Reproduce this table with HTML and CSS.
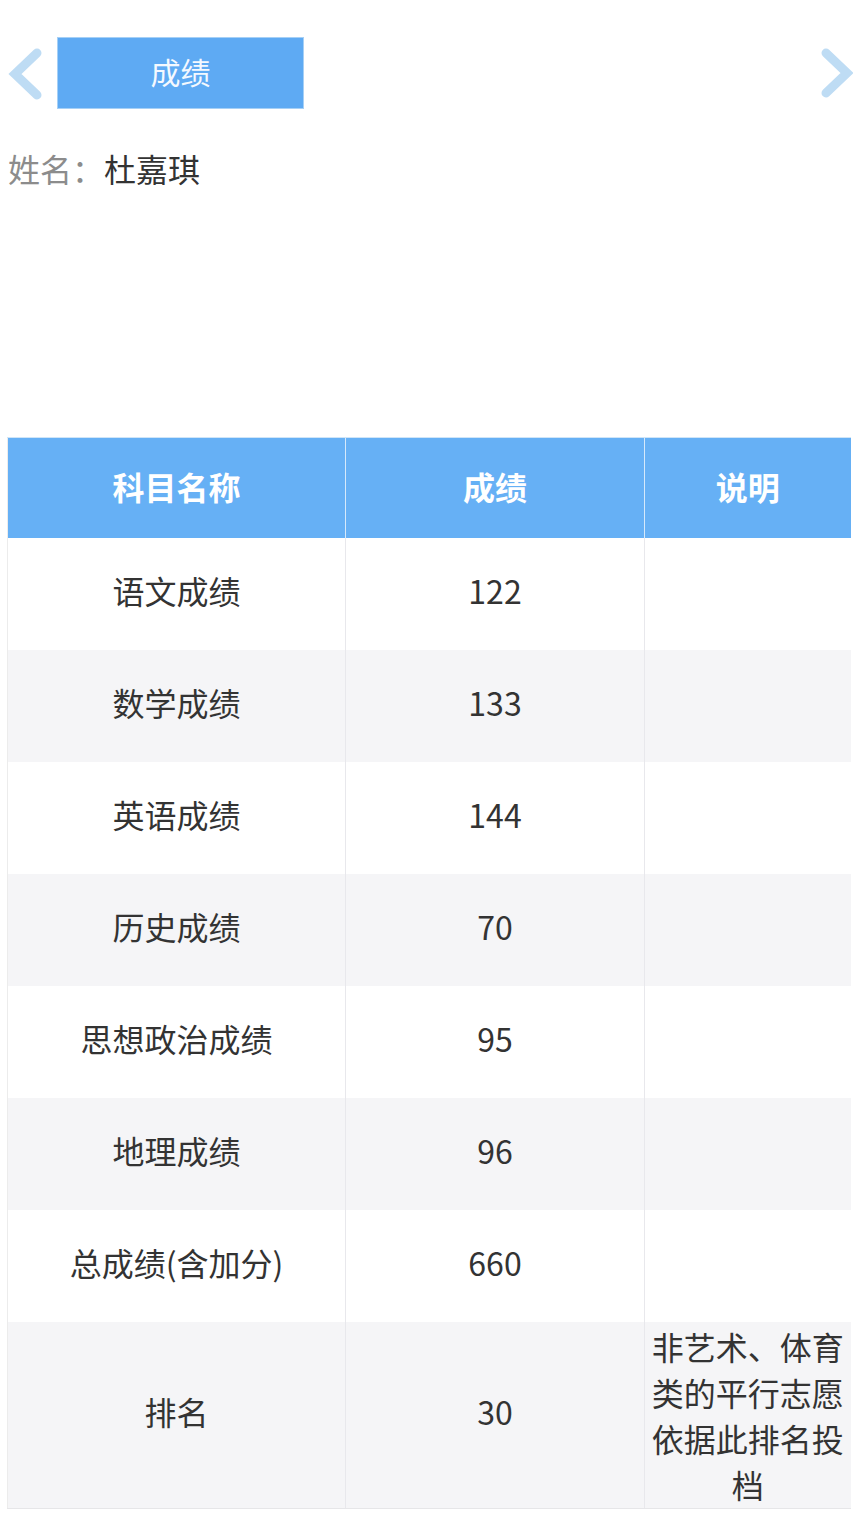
FILE: index.html
```html
<!DOCTYPE html>
<html lang="zh">
<head>
<meta charset="utf-8">
<title>成绩</title>
<link rel="stylesheet" href="styles.css">
</head>
<body>
<div class="page">
  <div class="tabbar">
    <svg class="arrow arrow-left" width="40" height="56" viewBox="0 0 40 56"><polyline points="32,8 10,29 32,50" fill="none" stroke="#bedcf4" stroke-width="9" stroke-linecap="round" stroke-linejoin="miter"/></svg>
    <div class="tab">成绩</div>
    <div class="spacer"></div>
    <svg class="arrow arrow-right" width="40" height="56" viewBox="0 0 40 56"><polyline points="13,8 34,28 13,48" fill="none" stroke="#bedcf4" stroke-width="9" stroke-linecap="round" stroke-linejoin="miter"/></svg>
  </div>
  <div class="name"><span class="label">姓名：</span><span class="value">杜嘉琪</span></div>
  <table class="scores">
    <colgroup><col class="c1"><col class="c2"><col class="c3"></colgroup>
    <thead>
      <tr><th>科目名称</th><th>成绩</th><th>说明</th></tr>
    </thead>
    <tbody>
      <tr><td>语文成绩</td><td>122</td><td></td></tr>
      <tr class="alt"><td>数学成绩</td><td>133</td><td></td></tr>
      <tr><td>英语成绩</td><td>144</td><td></td></tr>
      <tr class="alt"><td>历史成绩</td><td>70</td><td></td></tr>
      <tr><td>思想政治成绩</td><td>95</td><td></td></tr>
      <tr class="alt"><td>地理成绩</td><td>96</td><td></td></tr>
      <tr><td>总成绩(含加分)</td><td>660</td><td></td></tr>
      <tr class="alt last"><td>排名</td><td>30</td><td class="note">非艺术、体育类的平行志愿依据此排名投档</td></tr>
    </tbody>
  </table>
</div>
</body>
</html>
```
FILE: styles.css
```css
html, body {
  margin: 0;
  padding: 0;
  background: #ffffff;
}
body {
  font-family: "Noto Sans CJK SC", "Noto Sans", sans-serif;
  color: #333333;
}
.page {
  width: 853px;
  padding-top: 37px;
}
.tabbar {
  display: flex;
  align-items: center;
  height: 72px;
}
.arrow {
  flex: none;
}
.arrow-left {
  margin-left: 5px;
  margin-right: 12px;
}
.arrow-right {
  margin-right: 0;
}
.spacer {
  flex: 1;
}
.tab {
  width: 245px;
  height: 70px;
  background: #5eaaf3;
  border: 1px solid #a6d0f6;
  color: #f4f9ff;
  font-size: 30px;
  line-height: 66px;
  text-align: center;
}
.name {
  margin-top: 39px;
  padding-left: 8px;
  font-size: 32px;
  line-height: 40px;
  height: 40px;
  margin-bottom: 2px;
}
.name .label {
  color: #8c8c8c;
}
.name .value {
  color: #333333;
}
.scores {
  margin-top: 249px;
  margin-left: 7px;
  width: 843px;
  border-collapse: collapse;
  table-layout: fixed;
  border-left: 1px solid #ececec;
}
.c1 { width: 338px; }
.c2 { width: 299px; }
.c3 { width: 206px; }
.scores th {
  height: 95px;
  padding: 0 0 5px;
  background: #66b0f5;
  color: #ffffff;
  font-size: 32px;
  font-weight: 700;
  text-align: center;
  border-top: 1px solid #cfe5f8;
  border-left: 1px solid #d6e9fb;
}
.scores th:first-child {
  border-left: none;
}
.scores td {
  height: 104px;
  padding: 0 0 8px;
  font-size: 32px;
  text-align: center;
  color: #333333;
  border-left: 1px solid #e8e8ec;
}
.scores td:first-child {
  border-left: none;
}
.scores tr.alt td {
  background: #f5f5f7;
}
.scores tr.last td {
  height: 178px;
  border-bottom: 1px solid #e6e6e8;
}
.scores td.note {
  padding: 0 6px;
  line-height: 46px;
}
```
